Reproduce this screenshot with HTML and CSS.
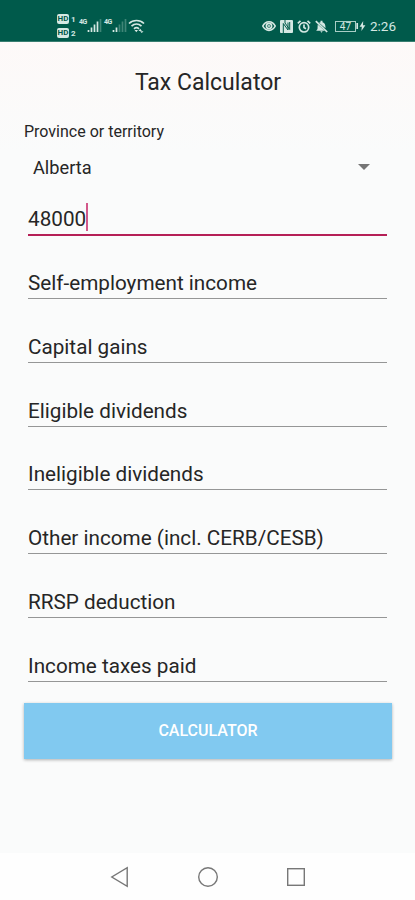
FILE: index.html
```
<!DOCTYPE html>
<html lang="en">
<head>
    <meta charset="UTF-8">
    <meta name="viewport" content="width=device-width, initial-scale=1.0">
    <title>Tax Calculator</title>
    <link rel="stylesheet" href="styles.css">
</head>
<body>
    <header class="status-bar">
        <div class="status-left">
            <div class="hd-group">
                <div class="hd"><b>HD</b><i>1</i></div>
                <div class="hd"><b>HD</b><i>2</i></div>
            </div>
            <div class="signal">
                <span>4G</span>
                <svg width="15" height="13" viewBox="0 0 15 13">
                    <path d="M1.5 11v2M4.5 8.500v4.500M7.500 5.500v7.500M10.500 2.500v10.500" />
                    <path class="dim" d="M13.500 0v13" />
                </svg>
            </div>
            <div class="signal second">
                <span>4G</span>
                <svg width="15" height="13" viewBox="0 0 15 13">
                    <path d="M1.500 11v2M4.500 8.500v4.500" />
                    <path class="dim" d="M7.500 5.500v7.500M10.500 2.500v10.500M13.500 0v13" />
                </svg>
            </div>
            <svg class="wifi" width="17" height="14" viewBox="0 0 17 14">
                <path d="M1 4.500C5 .5 12 .5 16 4.500M3.500 7.200c3-2.800 7-2.800 10 0M6 9.800c1.600-1.400 3.400-1.400 5 0" />
                <path class="fill" d="M6.500 11h3.500L8.300 13.200zM10.500 12l1.700-2.300 1.700 2.300zM12 12.300h3.500l-1.700 1.700z" />
            </svg>
        </div>
        <div class="status-right">
            <svg width="14" height="12" viewBox="0 0 14 12">
                <path d="M.8 6C3.500.3 10.500.3 13.200 6 10.500 11.700 3.500 11.700.8 6z" />
                <circle cx="7" cy="6" r="2.600" />
                <circle class="fill" cx="7" cy="6" r="1" />
            </svg>
            <svg width="13" height="13" viewBox="0 0 13 13">
                <path class="fill" d="M1 0h11a1 1 0 0 1 1 1v11a1 1 0 0 1-1 1H1a1 1 0 0 1-1-1V1a1 1 0 0 1 1-1z" />
                <path class="gap" d="M3.300 13V3.500L8 10V2.500M5 0v3l4.700 6.500V2" />
            </svg>
            <svg width="14" height="13" viewBox="0 0 14 13">
                <circle cx="7" cy="7.300" r="4.700" />
                <path d="M7 4.500v3l2 1.200M.8 3.300 3.500.9M13.200 3.300 10.500.9" />
            </svg>
            <svg width="13" height="13" viewBox="0 0 13 13">
                <path class="fill" d="M5.500 2.200V.8h2v1.400C10 3 10.500 5 10.500 8.300L4 2.800zM2.700 4.400 9.800 10.700H1.200l1.300-1.700zM5.300 11.300h2.400L6.500 12.800z" />
                <path d="M.8 1.200 12.200 12" />
            </svg>
            <div class="battery">
                <div class="battery-level">47</div>
                <svg width="10" height="12" viewBox="0 0 10 12">
                    <path d="M1.200 3v6" />
                    <path class="fill" d="M7.200 1 3.600 6.700h2.200L5.400 11 9.400 5.300H7z" />
                </svg>
            </div>
            <span class="clock">2:26</span>
        </div>
    </header>

    <main class="content">
        <h1>Tax Calculator</h1>
        <div class="label">Province or territory</div>
        <div class="select">
            <span>Alberta</span>
            <svg width="12" height="6" viewBox="0 0 12 6"><path d="M0 0h12L6 6z" /></svg>
        </div>
        <div class="fields">
            <div class="field active"><span>48000</span><i class="cursor"></i></div>
            <div class="field"><span>Self-employment income</span></div>
            <div class="field"><span>Capital gains</span></div>
            <div class="field"><span>Eligible dividends</span></div>
            <div class="field"><span>Ineligible dividends</span></div>
            <div class="field"><span>Other income (incl. CERB/CESB)</span></div>
            <div class="field"><span>RRSP deduction</span></div>
            <div class="field"><span>Income taxes paid</span></div>
        </div>
        <button class="calculate">CALCULATOR</button>
    </main>

    <nav class="nav-bar">
        <svg width="20" height="22" viewBox="0 0 20 22"><path d="M17.200 1.700v18.600L1.800 11z" /></svg>
        <svg width="22" height="22" viewBox="0 0 22 22"><circle cx="11" cy="11" r="9.300" /></svg>
        <svg width="20" height="20" viewBox="0 0 20 20"><rect x="1.700" y="1.700" width="16.600" height="16.600" /></svg>
    </nav>
</body>
</html>
```
FILE: styles.css
```
* {
    box-sizing: border-box;
}
body {
    margin: 0;
    height: 900px;
    display: flex;
    flex-direction: column;
    overflow: hidden;
    font-family: Roboto, sans-serif;
    background: #fafbfb;
    color: #262626;
}
svg {
    display: block;
    flex: none;
}
.status-bar {
    height: 42px;
    flex: none;
    display: flex;
    justify-content: space-between;
    padding: 11px 19px 0 57px;
    background: #005a4b;
    border-bottom: 1px solid #397e70;
    color: #d5e8e3;
}
.status-bar svg {
    fill: none;
    stroke: #d5e8e3;
    stroke-width: 1.7;
}
.status-bar .fill {
    fill: #d5e8e3;
    stroke: none;
}
.status-bar .gap {
    stroke: #005a4b;
    stroke-width: 1;
}
.status-bar .dim {
    stroke: #3f8577;
}
.status-left {
    display: flex;
    align-items: flex-start;
}
.hd-group {
    width: 22px;
    padding-top: 3px;
}
.hd {
    display: flex;
    align-items: flex-end;
    gap: 2px;
    height: 10px;
    margin-bottom: 4px;
    line-height: 10px;
}
.hd b {
    width: 12px;
    border-radius: 2px;
    background: #d5e8e3;
    color: #005a4b;
    font-size: 8px;
    text-align: center;
}
.hd i {
    font-style: normal;
    font-size: 8px;
    font-weight: bold;
    line-height: 8px;
}
.signal {
    display: flex;
    padding-top: 8px;
}
.signal span {
    width: 8px;
    font-size: 7px;
    font-weight: bold;
    line-height: 7px;
    letter-spacing: -0.5px;
}
.second {
    margin-left: 2px;
}
.wifi {
    margin: 8px 0 0 1px;
}
.status-right {
    display: flex;
    align-items: center;
    height: 30px;
    gap: 4px;
}
.battery {
    display: flex;
    align-items: center;
    margin-left: 3px;
}
.battery-level {
    width: 21px;
    height: 11px;
    border: 1px solid #a8cdc5;
    font-size: 10px;
    line-height: 9px;
    text-align: center;
}
.clock {
    font-size: 13.5px;
    line-height: 18px;
}
.content {
    flex: 1;
    padding: 0 23px 0 24px;
    background: linear-gradient(#fdf9f8, #fafbfb 110px);
}
h1 {
    margin: 0;
    padding-top: 25px;
    font-size: 23px;
    font-weight: normal;
    line-height: 32px;
    text-align: center;
}
.label {
    margin-top: 23px;
    font-size: 16px;
    line-height: 20px;
}
.select {
    display: flex;
    align-items: center;
    justify-content: space-between;
    height: 32px;
    margin-top: 9px;
    padding: 0 22px 0 9px;
    font-size: 18.2px;
}
.select svg {
    fill: #757575;
}
.fields {
    margin: 0 5px 0 4px;
    font-size: 20.7px;
    line-height: 26px;
}
.field {
    display: flex;
    align-items: flex-end;
    height: 63.8px;
    padding-bottom: 2px;
    border-bottom: 1px solid #959696;
}
.active {
    height: 53px;
    border-bottom: 2px solid #b51f56;
}
.active + .field {
    height: 63px;
}
.cursor {
    width: 2px;
    height: 28px;
    margin-bottom: 1px;
    background: #d2588a;
}
.calculate {
    display: block;
    width: 100%;
    height: 56px;
    margin-top: 21px;
    padding: 0;
    border: none;
    background: #81c9f0;
    box-shadow: 0 1px 3px rgba(0, 0, 0, 0.3);
    color: #fff;
    font-family: inherit;
    font-size: 16px;
    font-weight: 500;
}
.nav-bar {
    display: flex;
    align-items: center;
    justify-content: center;
    flex: none;
    height: 47px;
    gap: 67px;
    background: #fefefe;
}
.nav-bar svg {
    fill: none;
    stroke: #777;
    stroke-width: 1.4;
}
```
